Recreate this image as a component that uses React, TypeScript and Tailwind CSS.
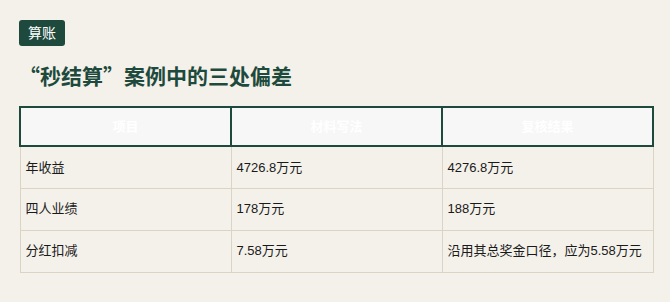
import React from 'react';

const ROWS = [
  ['年收益', '4726.8万元', '4276.8万元'],
  ['四人业绩', '178万元', '188万元'],
  ['分红扣减', '7.58万元', '沿用其总奖金口径，应为5.58万元'],
];
const HEAD = ['项目', '材料写法', '复核结果'];

export default function App() {
  return (
    <div className="w-[670px] h-[302px] bg-[#f4f1ea] overflow-hidden" style={{ fontFamily: '"Liberation Sans", "Noto Sans CJK SC", sans-serif' }}>
      <div className="px-[19px] pt-[20px]">
        <span className="inline-block bg-[#1d4a3c] text-white text-[14px] leading-[18px] px-[9px] py-[4px] rounded-[3px]">算账</span>
        <h2 className="mt-[15px] text-[21px] leading-[28px] font-bold text-[#1d4a3c]" style={{ fontFamily: '"Noto Sans CJK SC", sans-serif' }}>“秒结算”案例中的三处偏差</h2>
        <table className="mt-[17px] w-[635px] border-collapse text-[13px] text-[#1a1a1a]">
          <thead>
            <tr>
              {HEAD.map(h => (
                <th key={h} className="w-1/3 h-[39px] border-2 border-[#1d4a3c] bg-[#f7f7f7] text-white font-bold text-center">{h}</th>
              ))}
            </tr>
          </thead>
          <tbody>
            {ROWS.map(r => (
              <tr key={r[0]}>
                {r.map((c, i) => (
                  <td key={i} className="h-[42px] border border-[#ddd3c4] px-[5px] align-middle">{c}</td>
                ))}
              </tr>
            ))}
          </tbody>
        </table>
      </div>
    </div>
  );
}
